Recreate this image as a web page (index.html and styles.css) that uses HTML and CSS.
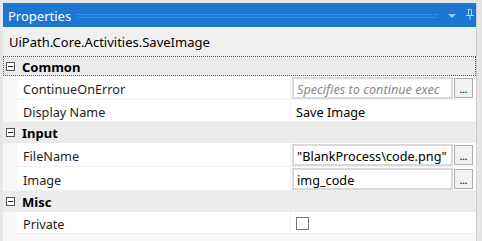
FILE: index.html
```html
<!DOCTYPE html>
<html>
<head>
<meta charset="utf-8">
<link rel="stylesheet" href="styles.css">
</head>
<body>
<div class="panel">
  <div class="titlebar">
    <span class="title">Properties</span>
    <span class="grip"></span>
    <svg class="drop" width="8" height="5" viewBox="0 0 8 5"><path d="M0 0H8L4 4Z" fill="#9fc8f1"/></svg>
    <svg class="pin" width="8" height="11" viewBox="0 0 8 11"><path d="M1.5 0.5H5.5V6.5M2.5 0.5V6.5M0 6.5H8M4 6.5V11" fill="none" stroke="#b3d4f4" stroke-width="1"/></svg>
  </div>
  <div class="desc">UiPath.Core.Activities.SaveImage</div>
  <div class="grid">
    <div class="cat focus h20"><span class="exp"></span><span class="catname">Common</span></div>
    <div class="row tall">
      <div class="name">ContinueOnError</div>
      <div class="val"><div class="box ph">Specifies to continue exec</div><div class="btn">...</div></div>
    </div>
    <div class="row">
      <div class="name">Display Name</div>
      <div class="val"><div class="plain">Save Image</div></div>
    </div>
    <div class="cat"><span class="exp"></span><span class="catname">Input</span></div>
    <div class="row tall">
      <div class="name">FileName</div>
      <div class="val"><div class="box">"BlankProcess\code.png"</div><div class="btn">...</div></div>
    </div>
    <div class="row tall">
      <div class="name">Image</div>
      <div class="val"><div class="box">img_code</div><div class="btn">...</div></div>
    </div>
    <div class="cat"><span class="exp"></span><span class="catname">Misc</span></div>
    <div class="row">
      <div class="name">Private</div>
      <div class="val"><span class="chk"></span></div>
    </div>
  </div>
</div>
</body>
</html>
```

FILE: styles.css
```css
html, body {
  margin: 0;
  padding: 0;
}
body {
  width: 482px;
  height: 241px;
  overflow: hidden;
  background: #e6e6e6;
  font-family: "Noto Sans", "Open Sans", sans-serif;
  font-size: 12px;
  color: #000;
}
.panel {
  margin: 3px 5px 0 3px;
  height: 238px;
  background: #f0f0f0;
  border-right: 1px solid #cdcdcd;
  display: flex;
  flex-direction: column;
}
.titlebar {
  height: 24px;
  background: #1a78d2;
  display: flex;
  align-items: center;
  padding-left: 5px;
}
.title {
  color: #fff;
  font-size: 13px;
  width: 69px;
  padding-top: 1px;
}
.grip {
  width: 361px;
  height: 4px;
  margin-top: 2px;
  background:
    linear-gradient(90deg, #5b9ee2 1px, transparent 1px) 0 0 / 2px 1px repeat-x,
    linear-gradient(90deg, #5b9ee2 1px, transparent 1px) 1px 3px / 2px 1px repeat-x;
  background-color: transparent;
}
.drop {
  margin-left: 10px;
  margin-top: 3px;
}
.pin {
  margin-left: 10px;
  margin-top: -2px;
}
.desc {
  height: 29px;
  line-height: 28px;
  padding-left: 6px;
  padding-top: 1px;
  font-size: 13px;
  box-sizing: border-box;
}
.grid {
  flex: 1;
  background: #f7f7f7;
  display: flex;
  flex-direction: column;
}
.cat {
  height: 21px;
  background: #ececec;
  display: flex;
  align-items: center;
  box-sizing: border-box;
  padding-left: 3px;
}
.cat.h20 { height: 20px; }
.cat.focus {
  border: 1px dotted #555;
  padding-left: 2px;
}
.exp {
  width: 9px;
  height: 9px;
  border: 1px solid #555;
  box-sizing: border-box;
  position: relative;
  background: #fff;
}
.exp::after {
  content: "";
  position: absolute;
  left: 1px;
  right: 1px;
  top: 3px;
  height: 1px;
  background: #222;
}
.catname {
  font-weight: bold;
  font-size: 13px;
  margin-left: 7px;
  padding-top: 1px;
}
.row {
  height: 22px;
  margin-left: 14px;
  background: #fff;
  border-bottom: 1px solid #f0f0f0;
  box-sizing: border-box;
  display: flex;
}
.row.tall { height: 24px; }
.name {
  width: 274px;
  box-sizing: border-box;
  border-right: 1px solid #f0f0f0;
  padding-left: 6px;
  padding-top: 2px;
  display: flex;
  align-items: center;
  color: #1e1e1e;
  font-size: 12.7px;
}
.val {
  flex: 1;
  display: flex;
  align-items: center;
  padding-left: 1px;
  gap: 1px;
}
.box {
  width: 161px;
  height: 22px;
  box-sizing: border-box;
  border: 2px solid #d9d9d9;
  background: #fff;
  padding-left: 3px;
  padding-top: 1px;
  line-height: 18px;
  white-space: nowrap;
  overflow: hidden;
  font-size: 12.7px;
}
.box.ph {
  color: #8a8a8a;
  font-style: italic;
}
.btn {
  width: 19px;
  height: 20px;
  box-sizing: border-box;
  border: 1px solid #adadad;
  background: #f2f2f2;
  font-size: 9px;
  line-height: 22px;
  text-align: center;
  font-weight: bold;
  color: #222;
  overflow: hidden;
}
.plain {
  padding-left: 4px;
  padding-top: 2px;
  font-size: 12.7px;
}
.chk {
  width: 13px;
  height: 13px;
  box-sizing: border-box;
  border: 1px solid #777;
  margin-left: 4px;
  margin-top: 1px;
  background: #fff;
}
```
